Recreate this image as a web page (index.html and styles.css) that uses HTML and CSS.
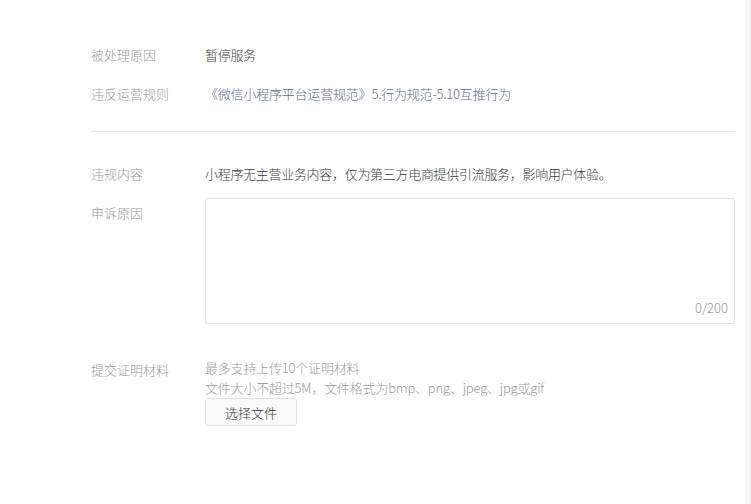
FILE: index.html
```html
<html>
  <head>
    <title>申诉</title>
    <link rel="stylesheet" href="styles.css">
  </head>
  <body>
    <div class="page">
      <div class="content">

        <div class="info">
          <div class="row">
            <div class="label">被处理原因</div>
            <div class="value">暂停服务</div>
          </div>
          <div class="row">
            <div class="label">违反运营规则</div>
            <a class="value link" href="#">《微信小程序平台运营规范》5.行为规范-5.10互推行为</a>
          </div>
        </div>

        <div class="divider"></div>

        <div class="form">
          <div class="row">
            <div class="label">违规内容</div>
            <div class="value">小程序无主营业务内容，仅为第三方电商提供引流服务，影响用户体验。</div>
          </div>

          <div class="row row-reason">
            <div class="label label-reason">申诉原因</div>
            <div class="textarea-box">
              <textarea class="textarea"></textarea>
              <span class="counter">0/200</span>
            </div>
          </div>

          <div class="row row-upload">
            <div class="label label-upload">提交证明材料</div>
            <div class="upload">
              <div class="tips">最多支持上传10个证明材料</div>
              <div class="tips">文件大小不超过5M，文件格式为bmp、png、jpeg、jpg或gif</div>
              <button class="btn" type="button">选择文件</button>
            </div>
          </div>
        </div>

      </div>
      <div class="scroll-track"></div>
    </div>
  </body>
</html>
```

FILE: styles.css
```css
body {
  margin: 0px;
  background: #ffffff;
  font-family: "Noto Sans CJK SC", "Microsoft YaHei", sans-serif;
  font-size: 13px;
  font-weight: 300;
  color: #353535;
}

.page {
  display: flex;
  min-height: 504px;
}

.content {
  flex: 1;
  padding: 45px 10px 0px 91px;
}

.scroll-track {
  width: 6px;
  background: #f7f7f7;
}

.row {
  display: flex;
  line-height: 20px;
}

.label {
  width: 114px;
  flex-shrink: 0;
  color: #9a9a9a;
}

.value {
  color: #3a3a3a;
  letter-spacing: -0.3px;
}

.link {
  color: #576b95;
  text-decoration: none;
  letter-spacing: -0.2px;
}

.info .row + .row {
  margin-top: 19px;
}

.divider {
  height: 1px;
  margin-top: 27px;
  background: #e7e7e7;
}

.form {
  padding-top: 32px;
}

.row-reason {
  margin-top: 14px;
}

.label-reason {
  padding-top: 5px;
}

.textarea-box {
  position: relative;
  flex: 1;
  height: 126px;
  border: 1px solid #e4e4e4;
  box-sizing: border-box;
  border-radius: 2px;
}

.textarea {
  width: 100%;
  height: 100%;
  border: none;
  outline: none;
  resize: none;
  padding: 8px 10px 26px;
  box-sizing: border-box;
  font-family: inherit;
  font-size: 13px;
  background: transparent;
}

.counter {
  position: absolute;
  right: 6px;
  bottom: 5px;
  line-height: 20px;
  color: #9a9a9a;
}

.row-upload {
  margin-top: 34px;
}

.label-upload {
  padding-top: 2px;
}

.tips {
  color: #9a9a9a;
  letter-spacing: -0.2px;
}

.btn {
  display: block;
  margin-top: 0px;
  width: 92px;
  height: 28px;
  background: #fafafa;
  border: 1px solid #e2e2e2;
  border-radius: 3px;
  font-family: inherit;
  font-size: 13px;
  font-weight: 300;
  color: #353535;
  padding: 0px;
}
```
